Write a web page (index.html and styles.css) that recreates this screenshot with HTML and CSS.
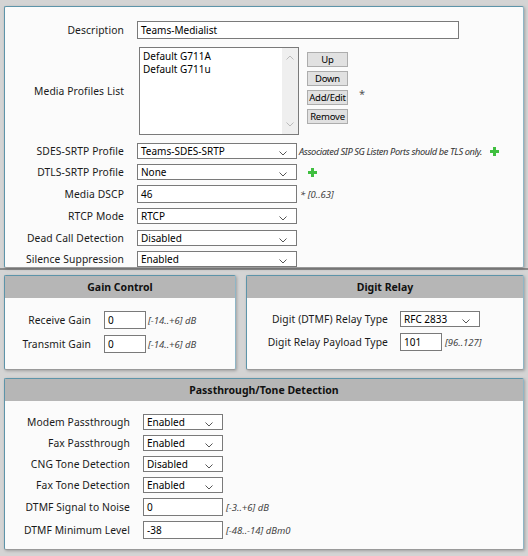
FILE: index.html
```html
<!DOCTYPE html>
<html lang="en">
<head>
  <meta charset="UTF-8">
  <title>Media List</title>
  <link rel="stylesheet" href="styles.css">
</head>
<body>
  <div class="top">
    <div class="panel main">
      <div class="row">
        <div class="lbl">Description</div>
        <div class="field desc">Teams-Medialist</div>
      </div>

      <div class="row list-row">
        <div class="lbl">Media Profiles List</div>
        <div class="listbox">
          <div class="items">
            <div>Default G711A</div>
            <div>Default G711u</div>
          </div>
          <div class="scroll">
            <svg width="8" height="5" viewBox="0 0 8 5"><polyline points="0.5,4.5 4,1 7.5,4.5" fill="none" stroke="#bbb"/></svg>
            <svg width="8" height="5" viewBox="0 0 8 5"><polyline points="0.5,0.5 4,4 7.5,0.5" fill="none" stroke="#bbb"/></svg>
          </div>
        </div>
        <div class="btns">
          <div class="btn">Up</div>
          <div class="btn">Down</div>
          <div class="btn">Add/Edit</div>
          <div class="btn">Remove</div>
        </div>
        <div class="star">*</div>
      </div>

      <div class="row first-sel">
        <div class="lbl">SDES-SRTP Profile</div>
        <div class="field select med">Teams-SDES-SRTP<svg class="chev" width="8" height="5" viewBox="0 0 8 5"><polyline points="0.5,0.5 4,4 7.5,0.5" fill="none" stroke="#555"/></svg></div>
        <div class="hint note">Associated SIP SG Listen Ports should be TLS only.</div>
        <svg class="plus" width="9" height="9" viewBox="0 0 9 9"><path d="M3 0h3v3h3v3h-3v3h-3v-3h-3v-3h3z" fill="#3fbf3f"/></svg>
      </div>

      <div class="row">
        <div class="lbl">DTLS-SRTP Profile</div>
        <div class="field select med">None<svg class="chev" width="8" height="5" viewBox="0 0 8 5"><polyline points="0.5,0.5 4,4 7.5,0.5" fill="none" stroke="#555"/></svg></div>
        <svg class="plus solo" width="9" height="9" viewBox="0 0 9 9"><path d="M3 0h3v3h3v3h-3v3h-3v-3h-3v-3h3z" fill="#3fbf3f"/></svg>
      </div>

      <div class="row">
        <div class="lbl">Media DSCP</div>
        <div class="field med tall">46</div>
        <div class="hint">* [0..63]</div>
      </div>

      <div class="row">
        <div class="lbl">RTCP Mode</div>
        <div class="field select med">RTCP<svg class="chev" width="8" height="5" viewBox="0 0 8 5"><polyline points="0.5,0.5 4,4 7.5,0.5" fill="none" stroke="#555"/></svg></div>
      </div>

      <div class="row gap6">
        <div class="lbl">Dead Call Detection</div>
        <div class="field select med">Disabled<svg class="chev" width="8" height="5" viewBox="0 0 8 5"><polyline points="0.5,0.5 4,4 7.5,0.5" fill="none" stroke="#555"/></svg></div>
      </div>

      <div class="row">
        <div class="lbl">Silence Suppression</div>
        <div class="field select med">Enabled<svg class="chev" width="8" height="5" viewBox="0 0 8 5"><polyline points="0.5,0.5 4,4 7.5,0.5" fill="none" stroke="#555"/></svg></div>
      </div>
    </div>
  </div>

  <div class="lower">
    <div class="pair">
      <div class="panel box gain">
        <div class="head">Gain Control</div>
        <div class="body">
          <div class="row">
            <div class="lbl">Receive Gain</div>
            <div class="field small">0</div>
            <div class="hint">[-14..+6] dB</div>
          </div>
          <div class="row">
            <div class="lbl">Transmit Gain</div>
            <div class="field small">0</div>
            <div class="hint">[-14..+6] dB</div>
          </div>
        </div>
      </div>

      <div class="panel box digit">
        <div class="head">Digit Relay</div>
        <div class="body">
          <div class="row">
            <div class="lbl">Digit (DTMF) Relay Type</div>
            <div class="field select short">RFC 2833<svg class="chev" width="8" height="5" viewBox="0 0 8 5"><polyline points="0.5,0.5 4,4 7.5,0.5" fill="none" stroke="#555"/></svg></div>
          </div>
          <div class="row">
            <div class="lbl">Digit Relay Payload Type</div>
            <div class="field small">101</div>
            <div class="hint">[96..127]</div>
          </div>
        </div>
      </div>
    </div>

    <div class="panel box pass">
      <div class="head">Passthrough/Tone Detection</div>
      <div class="body">
        <div class="row">
          <div class="lbl">Modem Passthrough</div>
          <div class="field select short">Enabled<svg class="chev" width="8" height="5" viewBox="0 0 8 5"><polyline points="0.5,0.5 4,4 7.5,0.5" fill="none" stroke="#555"/></svg></div>
        </div>
        <div class="row">
          <div class="lbl">Fax Passthrough</div>
          <div class="field select short">Enabled<svg class="chev" width="8" height="5" viewBox="0 0 8 5"><polyline points="0.5,0.5 4,4 7.5,0.5" fill="none" stroke="#555"/></svg></div>
        </div>
        <div class="row">
          <div class="lbl">CNG Tone Detection</div>
          <div class="field select short">Disabled<svg class="chev" width="8" height="5" viewBox="0 0 8 5"><polyline points="0.5,0.5 4,4 7.5,0.5" fill="none" stroke="#555"/></svg></div>
        </div>
        <div class="row">
          <div class="lbl">Fax Tone Detection</div>
          <div class="field select short">Enabled<svg class="chev" width="8" height="5" viewBox="0 0 8 5"><polyline points="0.5,0.5 4,4 7.5,0.5" fill="none" stroke="#555"/></svg></div>
        </div>
        <div class="row">
          <div class="lbl">DTMF Signal to Noise</div>
          <div class="field short tall">0</div>
          <div class="hint">[-3..+6] dB</div>
        </div>
        <div class="row">
          <div class="lbl">DTMF Minimum Level</div>
          <div class="field short tall">-38</div>
          <div class="hint">[-48..-14] dBm0</div>
        </div>
      </div>
    </div>
  </div>
</body>
</html>
```

FILE: styles.css
```css
body {
  margin: 0;
  background: #d4d4d4;
  font-family: "Noto Sans", "Open Sans", sans-serif;
  font-size: 10px;
  color: #000;
  height: 556px;
  overflow: hidden;
}
.top {
  padding: 6px 4px 0;
  border-bottom: 2px solid #8c8c8c;
}
.panel {
  background: #fbfbfb;
  border: 1px solid #5d94a9;
  border-right-color: #8fb6c6;
  border-bottom-color: #9a9a9a;
  box-shadow: 1px 1px 3px rgba(0, 0, 0, 0.25);
  border-radius: 2px;
}
.main {
  height: 262px;
  box-sizing: border-box;
  padding-top: 14px;
  display: flex;
  flex-direction: column;
  gap: 5px;
}
.row {
  display: flex;
  align-items: center;
  gap: 13px;
}
.lbl {
  text-align: right;
  font-size: 10.3px;
  letter-spacing: 0.1px;
  color: #1a1a1a;
  white-space: nowrap;
}
.main .lbl {
  width: 119px;
}
.field {
  box-sizing: border-box;
  height: 16px;
  border: 1px solid #7a7a7a;
  background: #fff;
  padding: 0 3px;
  line-height: 14px;
  position: relative;
  white-space: nowrap;
}
.field.tall {
  height: 18px;
  line-height: 16px;
}
.desc {
  width: 322px;
  height: 18px;
  line-height: 16px;
}
.med {
  width: 160px;
}
.short {
  width: 80px;
}
.small {
  width: 42px;
  height: 18px;
  line-height: 16px;
}
.chev {
  position: absolute;
  right: 9px;
  top: 7px;
}
.list-row {
  margin-top: 3px;
  gap: 0;
}
.list-row .lbl {
  margin-right: 15px;
}
.listbox {
  width: 160px;
  height: 88px;
  box-sizing: border-box;
  border: 1px solid #7a7a7a;
  background: #fff;
  display: flex;
}
.items {
  flex: 1;
  padding: 2px 3px;
  line-height: 13px;
}
.scroll {
  width: 16px;
  background: #efefef;
  display: flex;
  flex-direction: column;
  justify-content: space-between;
  align-items: center;
  padding: 7px 0 7px;
}
.btns {
  display: flex;
  flex-direction: column;
  gap: 4px;
  margin-left: 8px;
  margin-top: -7px;
}
.btn {
  width: 41px;
  height: 15px;
  box-sizing: border-box;
  background: #e1e1e1;
  border: 1px solid #adadad;
  text-align: center;
  line-height: 13px;
  font-size: 9.5px;
  letter-spacing: -0.2px;
}
.star {
  margin-left: 11px;
  margin-top: 4px;
  color: #555;
  font-size: 11px;
}
.first-sel {
  margin-top: 3px;
}
.gap6 {
  margin-top: 1px;
}
.hint {
  font-style: italic;
  color: #444;
  font-size: 9.5px;
  margin-left: -10px;
}
.note {
  margin-left: -11px;
  color: #333;
  font-size: 9.3px;
  letter-spacing: -0.4px;
}
.plus {
  margin-left: -5px;
}
.plus.solo {
  margin-left: -2px;
}
.lower {
  padding: 5px 4px 0;
  display: flex;
  flex-direction: column;
  gap: 8px;
}
.pair {
  display: flex;
  gap: 10px;
}
.box {
  display: flex;
  flex-direction: column;
}
.head {
  background: #b6b6b6;
  height: 22px;
  line-height: 22px;
  text-align: center;
  font-weight: bold;
  font-size: 10.5px;
  color: #111;
}
.body {
  display: flex;
  flex-direction: column;
  gap: 6px;
  padding-top: 13px;
}
.gain {
  width: 232px;
  height: 95px;
  box-sizing: border-box;
}
.gain .lbl {
  width: 86px;
}
.gain .row {
  gap: 13px;
}
.gain .hint {
  margin-left: -11px;
}
.digit {
  flex: 1;
  height: 95px;
  box-sizing: border-box;
}
.digit .lbl {
  width: 141px;
}
.digit .row {
  gap: 12px;
}
.digit .hint {
  margin-left: -9px;
}
.pass {
  height: 172px;
  box-sizing: border-box;
}
.pass .lbl {
  width: 125px;
}
.pass .body {
  gap: 5px;
  padding-top: 13px;
}
.pass .hint {
  margin-left: -10px;
}
```
